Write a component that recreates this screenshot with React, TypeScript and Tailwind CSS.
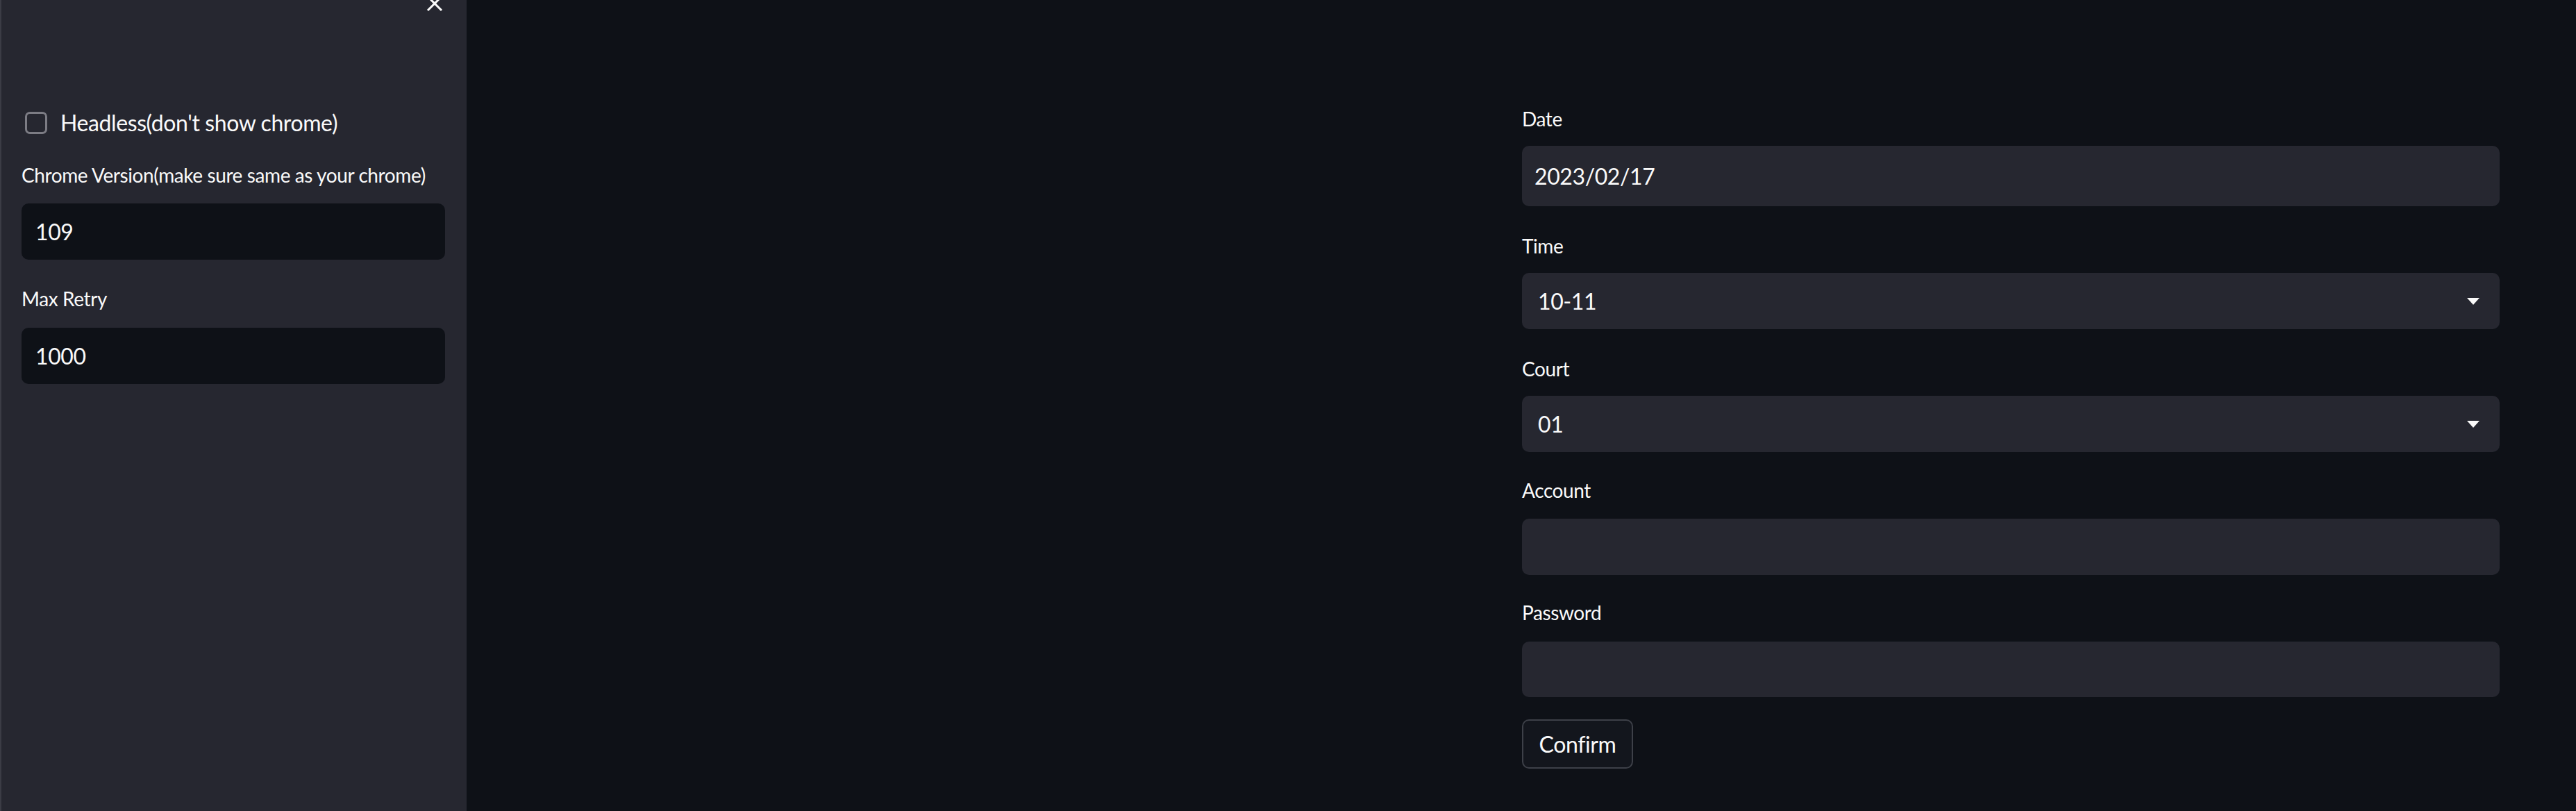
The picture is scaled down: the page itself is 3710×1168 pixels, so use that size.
import React from "react";

const font = { fontFamily: '"Lato", "Noto Sans", sans-serif' };

function Caret() {
  return (
    <svg width="18" height="10" viewBox="0 0 18 10" className="shrink-0">
      <path d="M0 0 H18 L9 10 Z" fill="#fafafa" />
    </svg>
  );
}

export default function App() {
  return (
    <div
      className="flex w-[3710px] h-[1168px] overflow-hidden bg-[#0e1117] text-[#fafafa] tracking-[-0.025em]"
      style={font}
    >
      <aside className="relative w-[672px] shrink-0 bg-[#262730] border-l-2 border-[#3b3c45] pl-[29px] pr-[31px]">
        <button className="absolute left-[611px] top-[-8px] w-[26px] h-[26px] flex items-center justify-center">
          <svg width="24" height="24" viewBox="0 0 24 24">
            <path d="M2 2 L22 22 M22 2 L2 22" stroke="#fafafa" strokeWidth="3" />
          </svg>
        </button>
        <div className="flex flex-col">
          <div className="mt-[160px] flex items-center h-[33px]">
            <div className="ml-[5px] w-[32px] h-[32px] rounded-[7px] border-[3px] border-[#7c7c84]" />
            <span className="ml-[19px] text-[32px] leading-[36px]">Headless(don't show chrome)</span>
          </div>
          <label className="mt-[41px] text-[28px] leading-[36px]">
            Chrome Version(make sure same as your chrome)
          </label>
          <div className="mt-[23px] h-[81px] rounded-[10px] bg-[#0e1117] flex items-center pl-[20px] text-[32px]">
            109
          </div>
          <label className="mt-[38px] text-[28px] leading-[36px]">Max Retry</label>
          <div className="mt-[24px] h-[81px] rounded-[10px] bg-[#0e1117] flex items-center pl-[20px] text-[32px]">
            1000
          </div>
        </div>
      </aside>
      <main className="flex-1 pl-[1520px]">
        <div className="w-[1408px] flex flex-col">
          <label className="mt-[153px] text-[28px] leading-[36px]">Date</label>
          <div className="mt-[21px] h-[87px] rounded-[10px] bg-[#262730] flex items-center pl-[18px] text-[32px]">
            2023/02/17
          </div>
          <label className="mt-[39px] text-[28px] leading-[36px]">Time</label>
          <div className="mt-[21px] h-[81px] rounded-[10px] bg-[#262730] flex items-center justify-between pl-[23px] pr-[29px] text-[32px]">
            <span>10-11</span>
            <Caret />
          </div>
          <label className="mt-[39px] text-[28px] leading-[36px]">Court</label>
          <div className="mt-[21px] h-[81px] rounded-[10px] bg-[#262730] flex items-center justify-between pl-[23px] pr-[29px] text-[32px]">
            <span>01</span>
            <Caret />
          </div>
          <label className="mt-[37px] text-[28px] leading-[36px]">Account</label>
          <div className="mt-[23px] h-[81px] rounded-[10px] bg-[#262730]" />
          <label className="mt-[36px] text-[28px] leading-[36px]">Password</label>
          <div className="mt-[24px] h-[80px] rounded-[10px] bg-[#262730]" />
          <button className="mt-[32px] self-start w-[160px] h-[71px] rounded-[10px] border-2 border-[#3d4048] bg-[#13161d] text-[32px] flex items-center justify-center">
            Confirm
          </button>
        </div>
      </main>
    </div>
  );
}
